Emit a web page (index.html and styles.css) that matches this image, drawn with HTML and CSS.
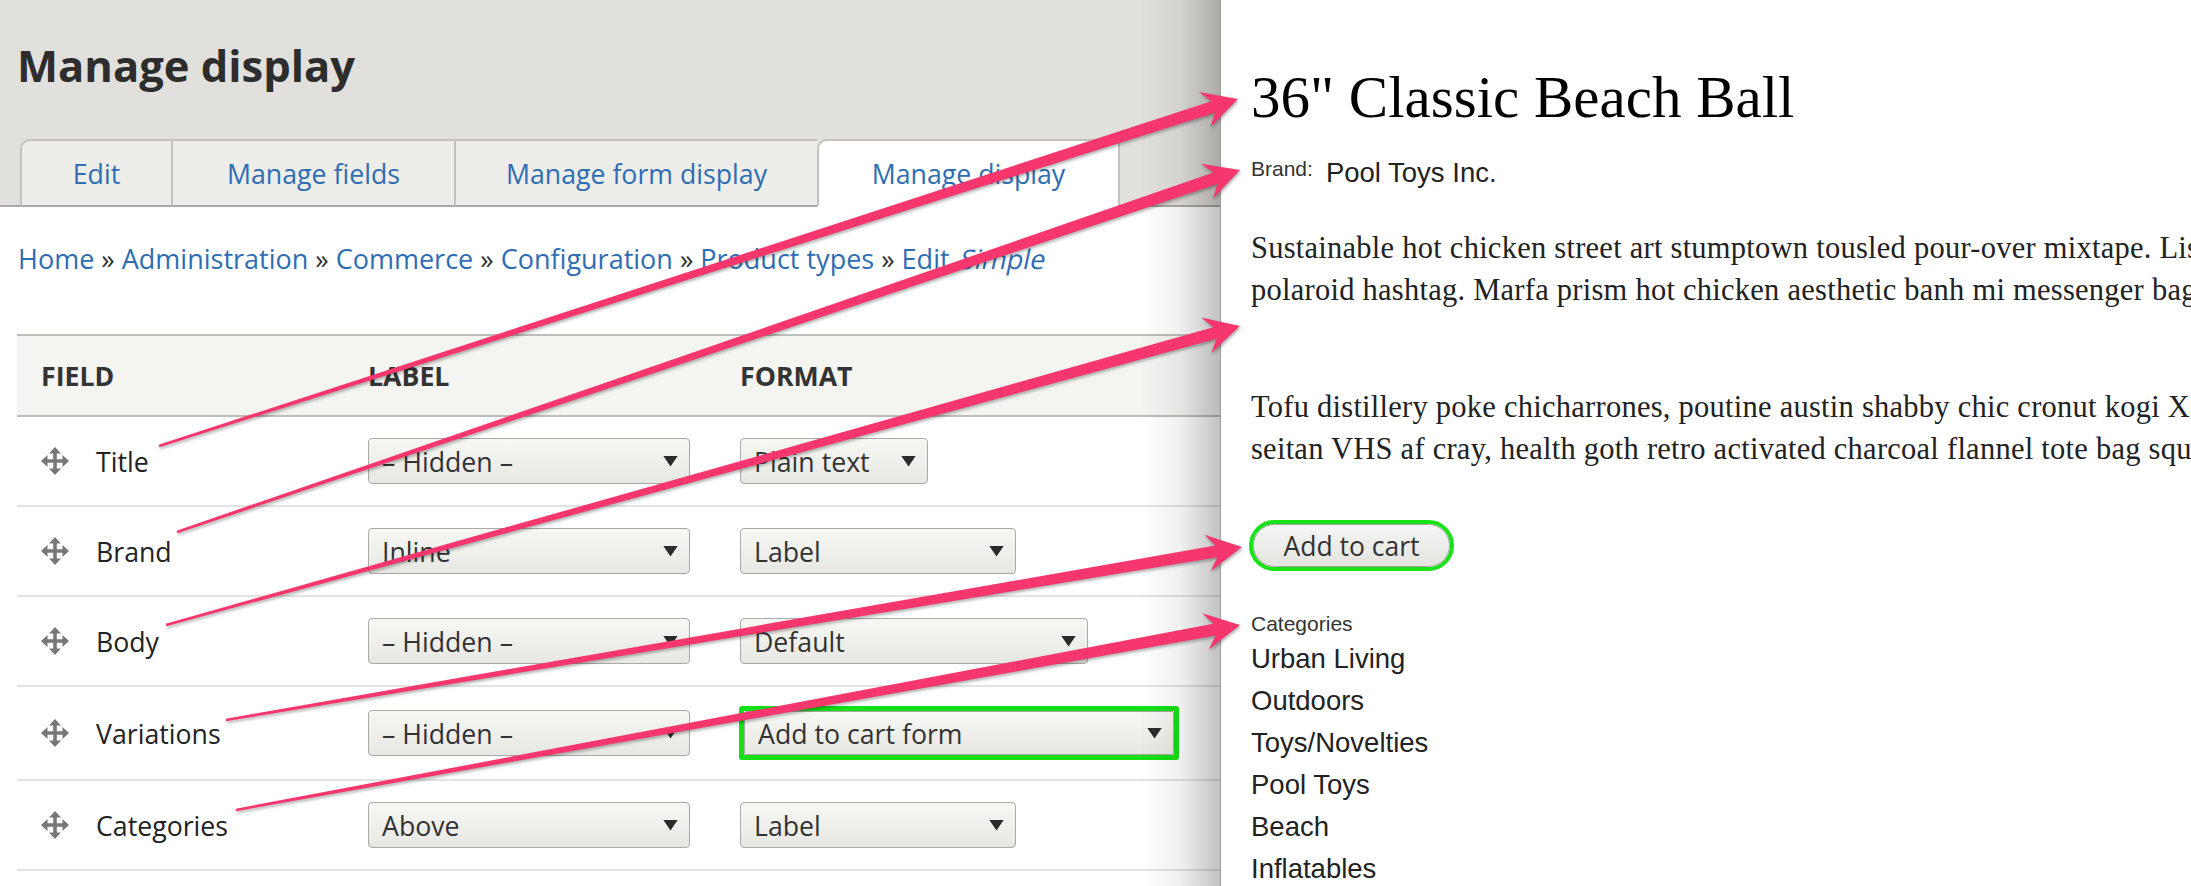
FILE: index.html
```html
<!DOCTYPE html>
<html lang="en">
<head>
<meta charset="utf-8">
<title>Manage display</title>
<link rel="stylesheet" href="styles.css">
</head>
<body>
<div class="page">
  <div class="admin">
    <header class="admin-header">
      <h1 class="page-title">Manage display</h1>
      <nav class="tabs">
        <a class="tab tab-first tab-edit">Edit</a>
        <a class="tab tab-fields">Manage fields</a>
        <a class="tab tab-form">Manage form display</a>
        <a class="tab tab-active tab-display">Manage display</a>
      </nav>
    </header>
    <div class="admin-content">
      <div class="breadcrumb">
        <a>Home</a> <span class="sep">»</span> <a>Administration</a> <span class="sep">»</span> <a>Commerce</a> <span class="sep">»</span> <a>Configuration</a> <span class="sep">»</span> <a>Product types</a> <span class="sep">»</span> <a>Edit <em class="oblique">Simple</em></a>
      </div>
      <div class="field-table">
        <div class="tr thead">
          <div class="cell c1">Field</div>
          <div class="cell c2">Label</div>
          <div class="cell c3">Format</div>
        </div>
        <div class="tr">
          <div class="cell c1"><svg class="drag" viewBox="0 0 28 28"><path d="M14 0 L20 6.5 H15.8 V12.2 H21.5 V8 L28 14 L21.5 20 V15.8 H15.8 V21.5 H20 L14 28 L8 21.5 H12.2 V15.8 H6.5 V20 L0 14 L6.5 8 V12.2 H12.2 V6.5 H8 Z"/></svg><span>Title</span></div>
          <div class="cell c2"><div class="select w-label">– Hidden –</div></div>
          <div class="cell c3"><div class="select w-plain">Plain text</div></div>
        </div>
        <div class="tr">
          <div class="cell c1"><svg class="drag" viewBox="0 0 28 28"><path d="M14 0 L20 6.5 H15.8 V12.2 H21.5 V8 L28 14 L21.5 20 V15.8 H15.8 V21.5 H20 L14 28 L8 21.5 H12.2 V15.8 H6.5 V20 L0 14 L6.5 8 V12.2 H12.2 V6.5 H8 Z"/></svg><span>Brand</span></div>
          <div class="cell c2"><div class="select w-label">Inline</div></div>
          <div class="cell c3"><div class="select w-lbl">Label</div></div>
        </div>
        <div class="tr">
          <div class="cell c1"><svg class="drag" viewBox="0 0 28 28"><path d="M14 0 L20 6.5 H15.8 V12.2 H21.5 V8 L28 14 L21.5 20 V15.8 H15.8 V21.5 H20 L14 28 L8 21.5 H12.2 V15.8 H6.5 V20 L0 14 L6.5 8 V12.2 H12.2 V6.5 H8 Z"/></svg><span>Body</span></div>
          <div class="cell c2"><div class="select w-label">– Hidden –</div></div>
          <div class="cell c3"><div class="select w-default">Default</div></div>
        </div>
        <div class="tr tr-tall">
          <div class="cell c1"><svg class="drag" viewBox="0 0 28 28"><path d="M14 0 L20 6.5 H15.8 V12.2 H21.5 V8 L28 14 L21.5 20 V15.8 H15.8 V21.5 H20 L14 28 L8 21.5 H12.2 V15.8 H6.5 V20 L0 14 L6.5 8 V12.2 H12.2 V6.5 H8 Z"/></svg><span>Variations</span></div>
          <div class="cell c2"><div class="select w-label">– Hidden –</div></div>
          <div class="cell c3"><div class="highlight"><div class="select w-cart">Add to cart form</div></div></div>
        </div>
        <div class="tr">
          <div class="cell c1"><svg class="drag" viewBox="0 0 28 28"><path d="M14 0 L20 6.5 H15.8 V12.2 H21.5 V8 L28 14 L21.5 20 V15.8 H15.8 V21.5 H20 L14 28 L8 21.5 H12.2 V15.8 H6.5 V20 L0 14 L6.5 8 V12.2 H12.2 V6.5 H8 Z"/></svg><span>Categories</span></div>
          <div class="cell c2"><div class="select w-label">Above</div></div>
          <div class="cell c3"><div class="select w-lbl">Label</div></div>
        </div>
      </div>
    </div>
  </div>

  <main class="product">
    <h1 class="product-title">36" Classic Beach Ball</h1>
    <div class="brand"><span class="brand-label">Brand:</span><span class="brand-value">Pool Toys Inc.</span></div>
    <p class="body-text p1">Sustainable hot chicken street art stumptown tousled pour-over mixtape. Listicle craft beer<br>polaroid hashtag. Marfa prism hot chicken aesthetic banh mi messenger bag fixie.</p>
    <p class="body-text p2">Tofu distillery poke chicharrones, poutine austin shabby chic cronut kogi XOXO<br>seitan VHS af cray, health goth retro activated charcoal flannel tote bag squid.</p>
    <div class="cart-ring"><button class="cart-btn">Add to cart</button></div>
    <div class="cat-label">Categories</div>
    <ul class="cat-list">
      <li>Urban Living</li>
      <li>Outdoors</li>
      <li>Toys/Novelties</li>
      <li>Pool Toys</li>
      <li>Beach</li>
      <li>Inflatables</li>
    </ul>
  </main>

  <svg class="arrows" width="2191" height="886" viewBox="0 0 2191 886">
    <g class="arrow-fill">
      <polygon transform="translate(159 446) rotate(-17.83)" points="0,-1.3 1107.4,-6 1098.4,-18.5 1133.4,0 1098.4,18.5 1107.4,6 0,1.3"/>
      <polygon transform="translate(177 532) rotate(-18.81)" points="0,-1.3 1097,-6 1088,-18.5 1123,0 1088,18.5 1097,6 0,1.3"/>
      <polygon transform="translate(166 625) rotate(-15.56)" points="0,-1.3 1088.8,-6 1079.8,-18.5 1114.8,0 1079.8,18.5 1088.8,6 0,1.3"/>
      <polygon transform="translate(226 720) rotate(-9.66)" points="0,-1.3 1004.6,-6 995.6,-18.5 1030.6,0 995.6,18.5 1004.6,6 0,1.3"/>
      <polygon transform="translate(236 810) rotate(-10.44)" points="0,-1.3 994.9,-6 985.9,-18.5 1020.9,0 985.9,18.5 994.9,6 0,1.3"/>
    </g>
  </svg>
</div>
</body>
</html>
```

FILE: styles.css
```css
html, body {
  margin: 0;
  padding: 0;
  background: #fff;
}
body {
  width: 2191px;
  height: 886px;
  overflow: hidden;
}
.page {
  position: relative;
  display: flex;
  width: 2191px;
  height: 886px;
  overflow: hidden;
}

/* ---------- Admin (left) ---------- */
.admin {
  position: relative;
  flex: none;
  width: 1220px;
  height: 886px;
  overflow: hidden;
  background: #fff;
  font-family: "Open Sans", "DejaVu Sans", sans-serif;
  color: #222;
}
.admin::after {
  content: "";
  position: absolute;
  top: 0;
  right: 0;
  bottom: 0;
  width: 80px;
  background: linear-gradient(to right, rgba(0,0,0,0) 0%, rgba(0,0,0,0.06) 50%, rgba(0,0,0,0.24) 100%);
  pointer-events: none;
}
.admin-header {
  background: #e1e0dc;
  padding: 44px 0 0 17px;
  border-bottom: 2px solid #a9a9a6;
  height: 161px;
}
.page-title {
  margin: 0;
  font-size: 43.5px;
  line-height: 43px;
  font-weight: 700;
  color: #2d2d2d;
}
.tabs {
  display: flex;
  margin: 52px 0 -2px 3px;
  height: 68px;
}
.tab {
  box-sizing: border-box;
  height: 68px;
  display: flex;
  align-items: center;
  justify-content: center;
  background: #ededea;
  border: 2px solid #c3c3be;
  border-right: none;
  border-bottom-color: #a9a9a6;
  color: #2f6db3;
  font-size: 26.7px;
}
.tab-first { border-top-left-radius: 10px; }
.tab-active {
  background: #fff;
  border-right: 2px solid #c3c3be;
  border-bottom-color: #fff;
  border-top-left-radius: 10px;
}
.tab-edit { width: 151px; }
.tab-fields { width: 283px; }
.tab-form { width: 363px; }
.tab-display { width: 303px; }

.admin-content {
  padding-left: 17px;
}
.breadcrumb {
  margin: 34px 0 0 1px;
  font-size: 27px;
  line-height: 36px;
  color: #333;
  white-space: nowrap;
}
.breadcrumb a { color: #2f6db3; }
.breadcrumb .sep { color: #333; }
.oblique {
  display: inline-block;
  font-style: normal;
  transform: skewX(-12deg);
  transform-origin: bottom left;
}

.field-table {
  margin-top: 57px;
}
.tr {
  display: grid;
  grid-template-columns: 351px 372px 1fr;
  align-items: center;
  box-sizing: border-box;
  height: 90px;
  border-bottom: 2px solid #e3e3e1;
  font-size: 26.7px;
}
.tr-tall { height: 94px; }
.thead {
  height: 83px;
  background: #f4f4f1;
  border-top: 2px solid #bdbdba;
  border-bottom: 2px solid #bdbdba;
  font-weight: 700;
  text-transform: uppercase;
  color: #333;
}
.c1 {
  padding-left: 24px;
  display: flex;
  align-items: center;
}
.drag {
  width: 28px;
  height: 28px;
  margin-right: 27px;
  fill: #777;
  flex: none;
}
.select {
  box-sizing: border-box;
  display: flex;
  align-items: center;
  justify-content: space-between;
  height: 46px;
  padding: 0 11px 0 13px;
  border: 1.5px solid #a8a8a5;
  border-radius: 4px;
  background: linear-gradient(#f7f7f4, #e7e7e3);
  color: #333;
  font-size: 26.7px;
  white-space: nowrap;
}
.select::after {
  content: "";
  flex: none;
  width: 15px;
  height: 11px;
  background: #2b2b2b;
  clip-path: polygon(0 0, 100% 0, 50% 100%);
}
.w-label { width: 322px; }
.w-plain { width: 188px; }
.w-lbl { width: 276px; }
.w-default { width: 348px; }
.w-cart { width: 430px; height: 44px; border-radius: 2px; }
.highlight {
  width: 440px;
  box-sizing: border-box;
  border: 5px solid #14e014;
  border-radius: 3px;
  margin-left: -1px;
}

/* ---------- Product (right) ---------- */
.product {
  flex: 1;
  min-width: 0;
  overflow: hidden;
  background: #fff;
  border-left: 1px solid #9e9e9b;
  padding-left: 30px;
  color: #222;
}
.product-title {
  margin: 69px 0 0;
  font-family: "Liberation Serif", "Times New Roman", serif;
  font-weight: 400;
  font-size: 59px;
  line-height: 57px;
  color: #000;
  white-space: nowrap;
}
.brand {
  margin-top: 28px;
  height: 30px;
  line-height: 30px;
  font-family: "Liberation Sans", Arial, sans-serif;
  white-space: nowrap;
}
.brand-label {
  font-size: 21px;
  color: #333;
  vertical-align: 6px;
  margin-right: 13px;
}
.brand-value {
  font-size: 27.5px;
  color: #222;
}
.body-text {
  margin: 0;
  font-family: "Liberation Serif", "Times New Roman", serif;
  font-size: 30.5px;
  letter-spacing: 0.25px;
  line-height: 42px;
  color: #222;
  white-space: nowrap;
}
.p1 { margin-top: 43px; }
.p2 { margin-top: 75px; }
.cart-ring {
  display: inline-block;
  margin: 50px 0 0 -2px;
  border: 4px solid #17e317;
  border-radius: 30px;
}
.cart-btn {
  display: block;
  box-sizing: border-box;
  width: 197px;
  height: 43px;
  margin: 0;
  padding: 0;
  border: 1px solid #a3a3a0;
  border-radius: 22px;
  background: linear-gradient(#f6f6f4, #e3e3e0);
  font-family: "Open Sans", "DejaVu Sans", sans-serif;
  font-size: 26.5px;
  color: #333;
}
.cat-label {
  margin-top: 40px;
  font-family: "Liberation Sans", Arial, sans-serif;
  font-size: 21px;
  line-height: 26px;
  color: #333;
}
.cat-list {
  list-style: none;
  margin: 1px 0 0;
  padding: 0;
  font-family: "Liberation Sans", Arial, sans-serif;
  font-size: 27.5px;
  line-height: 42px;
  color: #222;
}

/* ---------- Annotation arrows ---------- */
.arrows {
  position: absolute;
  top: 0;
  left: 0;
  pointer-events: none;
  filter: drop-shadow(1px 2px 1.5px rgba(0,0,0,0.3));
}
.arrow-fill { fill: #f5376e; }
```
